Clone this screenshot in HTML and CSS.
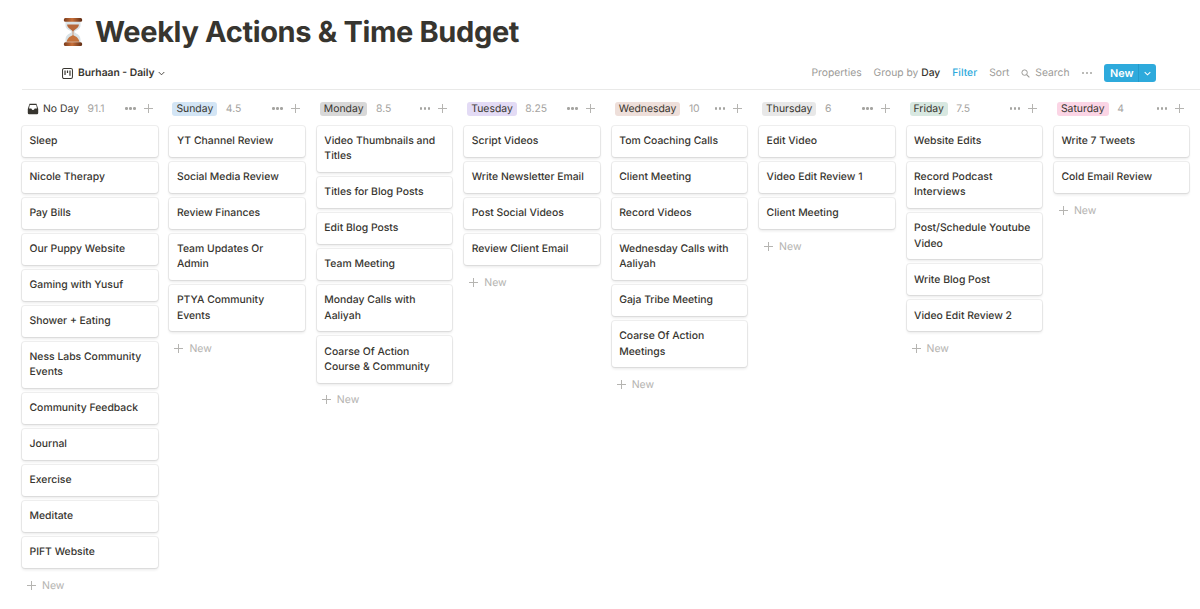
FILE: index.html
```html
<!DOCTYPE html>
<html lang="en">
<head>
<meta charset="utf-8">
<title>Weekly Actions &amp; Time Budget</title>
<link rel="stylesheet" href="styles.css">
</head>
<body>
<header class="head">
  <svg class="hourglass" viewBox="0 0 20 28" aria-hidden="true">
    <defs>
      <linearGradient id="wood" x1="0" x2="1" y1="0" y2="0"><stop offset="0" stop-color="#7a3c1c"/><stop offset=".45" stop-color="#c8703a"/><stop offset="1" stop-color="#5f2c14"/></linearGradient>
    </defs>
    <path d="M3 4 H17 V8 C17 12 12 12.5 11.3 14 C12 15.5 17 16 17 21 V24 H3 V21 C3 16 8 15.5 8.7 14 C8 12.5 3 12 3 8 Z" fill="#d9e2e6"/>
    <path d="M4.5 7 H15.5 C15.5 10.5 11.5 11.5 10 13.5 C8.500 11.500 4.500 10.500 4.500 7 Z" fill="#b7683a"/>
    <path d="M4 23 C5 19 8 17.500 10 17 C12 17.500 15 19 16 23 Z" fill="#c4723c"/>
    <rect x="9.700" y="13" width=".6" height="5" fill="#c4723c"/>
    <rect x="1.500" y="1" width="17" height="3.500" rx="1.400" fill="url(#wood)"/>
    <rect x="1.500" y="23.500" width="17" height="3.500" rx="1.400" fill="url(#wood)"/>
  </svg>
  <h1 class="title">Weekly Actions &amp; Time Budget</h1>
</header>

<nav class="toolbar">
  <div class="view">
    <svg class="view-icon" viewBox="0 0 12 12" aria-hidden="true"><rect x=".6" y=".6" width="10.800" height="10.800" rx="1.600" fill="none" stroke="#37352f" stroke-width="1.100"/><path d="M3.300 2.800 V7.500 M6 2.800 V5.500 M8.700 2.800 V8.500" stroke="#37352f" stroke-width="1.300" fill="none"/></svg>
    <span>Burhaan - Daily</span>
    <svg class="caret" viewBox="0 0 8 5" aria-hidden="true"><path d="M.8 .8 L4 4 L7.200 .8" fill="none" stroke="#37352f" stroke-width="1"/></svg>
  </div>
  <div class="actions">
    <span>Properties</span>
    <span>Group by <b class="strong">Day</b></span>
    <span class="blue">Filter</span>
    <span>Sort</span>
    <span class="search">
      <svg class="search-icon" viewBox="0 0 10 10" aria-hidden="true"><circle cx="4" cy="4" r="3" fill="none" stroke="#9b9a97" stroke-width="1.100"/><path d="M6.200 6.200 L9.300 9.300" stroke="#9b9a97" stroke-width="1.200"/></svg>
      Search
    </span>
    <span class="dots dots-top"><i></i><i></i><i></i></span>
    <div class="new-btn">
      <span class="new-label">New</span>
      <span class="new-arrow"><svg class="new-caret" viewBox="0 0 8 5" aria-hidden="true"><path d="M.8 .8 L4 4 L7.200 .8" fill="none" stroke="#fff" stroke-width="1.200"/></svg></span>
    </div>
  </div>
</nav>

<main class="board">
  <section class="col">
    <div class="col-head">
      <svg class="inbox" viewBox="0 0 12 12" aria-hidden="true"><path d="M2.500 .8 H9.500 L11.200 6 V10 Q11.200 11.200 10 11.200 H2 Q.8 11.200 .8 10 V6 Z" fill="#37352f"/><path d="M2.800 2 H9.200 L10 5.500 H7.700 Q7 7 6 7 Q5 7 4.300 5.500 H2 Z" fill="#fff"/></svg>
      <span class="plain">No Day</span><span class="sum">91.1</span>
      <span class="tools"><span class="dots"><i></i><i></i><i></i></span><span class="plus"></span></span>
    </div>
    <div class="card">Sleep</div>
    <div class="card">Nicole Therapy</div>
    <div class="card">Pay Bills</div>
    <div class="card">Our Puppy Website</div>
    <div class="card">Gaming with Yusuf</div>
    <div class="card">Shower + Eating</div>
    <div class="card">Ness Labs Community Events</div>
    <div class="card">Community Feedback</div>
    <div class="card">Journal</div>
    <div class="card">Exercise</div>
    <div class="card">Meditate</div>
    <div class="card">PIFT Website</div>
    <div class="add"><span class="plus"></span>New</div>
  </section>

  <section class="col">
    <div class="col-head"><span class="tag sun">Sunday</span><span class="sum">4.5</span>
      <span class="tools"><span class="dots"><i></i><i></i><i></i></span><span class="plus"></span></span></div>
    <div class="card">YT Channel Review</div>
    <div class="card">Social Media Review</div>
    <div class="card">Review Finances</div>
    <div class="card">Team Updates Or Admin</div>
    <div class="card">PTYA Community Events</div>
    <div class="add"><span class="plus"></span>New</div>
  </section>

  <section class="col">
    <div class="col-head"><span class="tag mon">Monday</span><span class="sum">8.5</span>
      <span class="tools"><span class="dots"><i></i><i></i><i></i></span><span class="plus"></span></span></div>
    <div class="card">Video Thumbnails and Titles</div>
    <div class="card">Titles for Blog Posts</div>
    <div class="card">Edit Blog Posts</div>
    <div class="card">Team Meeting</div>
    <div class="card">Monday Calls with Aaliyah</div>
    <div class="card">Coarse Of Action Course &amp; Community</div>
    <div class="add"><span class="plus"></span>New</div>
  </section>

  <section class="col">
    <div class="col-head"><span class="tag tue">Tuesday</span><span class="sum">8.25</span>
      <span class="tools"><span class="dots"><i></i><i></i><i></i></span><span class="plus"></span></span></div>
    <div class="card">Script Videos</div>
    <div class="card">Write Newsletter Email</div>
    <div class="card">Post Social Videos</div>
    <div class="card">Review Client Email</div>
    <div class="add"><span class="plus"></span>New</div>
  </section>

  <section class="col">
    <div class="col-head"><span class="tag wed">Wednesday</span><span class="sum">10</span>
      <span class="tools"><span class="dots"><i></i><i></i><i></i></span><span class="plus"></span></span></div>
    <div class="card">Tom Coaching Calls</div>
    <div class="card">Client Meeting</div>
    <div class="card">Record Videos</div>
    <div class="card">Wednesday Calls with Aaliyah</div>
    <div class="card">Gaja Tribe Meeting</div>
    <div class="card">Coarse Of Action Meetings</div>
    <div class="add"><span class="plus"></span>New</div>
  </section>

  <section class="col">
    <div class="col-head"><span class="tag thu">Thursday</span><span class="sum">6</span>
      <span class="tools"><span class="dots"><i></i><i></i><i></i></span><span class="plus"></span></span></div>
    <div class="card">Edit Video</div>
    <div class="card">Video Edit Review 1</div>
    <div class="card">Client Meeting</div>
    <div class="add"><span class="plus"></span>New</div>
  </section>

  <section class="col">
    <div class="col-head"><span class="tag fri">Friday</span><span class="sum">7.5</span>
      <span class="tools"><span class="dots"><i></i><i></i><i></i></span><span class="plus"></span></span></div>
    <div class="card">Website Edits</div>
    <div class="card">Record Podcast Interviews</div>
    <div class="card">Post/Schedule Youtube Video</div>
    <div class="card">Write Blog Post</div>
    <div class="card">Video Edit Review 2</div>
    <div class="add"><span class="plus"></span>New</div>
  </section>

  <section class="col">
    <div class="col-head"><span class="tag sat">Saturday</span><span class="sum">4</span>
      <span class="tools"><span class="dots"><i></i><i></i><i></i></span><span class="plus"></span></span></div>
    <div class="card">Write 7 Tweets</div>
    <div class="card">Cold Email Review</div>
    <div class="add"><span class="plus"></span>New</div>
  </section>
</main>
</body>
</html>
```
FILE: styles.css
```css
* { box-sizing: border-box; }
html, body { margin: 0; padding: 0; }
body {
  width: 1200px;
  height: 609px;
  overflow: hidden;
  background: #fff;
  color: #37352f;
  font-family: Inter, "Liberation Sans", sans-serif;
  font-size: 10.5px;
  text-rendering: geometricPrecision;
}
.head {
  display: flex;
  align-items: center;
  gap: 11px;
  height: 60px;
  padding: 3px 0 0 62px;
}
.hourglass { width: 22px; height: 30px; flex: none; }
.title {
  margin: 0;
  font-size: 29px;
  line-height: 38px;
  font-weight: 700;
  letter-spacing: -0.35px;
  color: #37352f;
}
.toolbar {
  display: flex;
  justify-content: space-between;
  align-items: center;
  height: 26px;
  margin-left: 22px;
  padding: 0 44px 3px 40px;
  border-bottom: 1px solid #e9e9e8;
  box-sizing: content-box;
}
.view { display: flex; align-items: center; font-weight: 600; font-size: 10.3px; }
.view-icon { width: 11px; height: 11px; margin-right: 5px; }
.caret { width: 7px; height: 5px; margin-left: 3px; }
.actions { display: flex; align-items: center; gap: 12px; color: #9b9a97; font-size: 10.3px; }
.strong { font-weight: 500; color: #37352f; }
.blue { color: #2eaadc; font-weight: 500; }
.search { display: flex; align-items: center; gap: 5px; }
.search-icon { width: 9px; height: 9px; }
.dots { display: inline-flex; gap: 1.500px; align-items: center; }
.dots i { width: 2.500px; height: 2.500px; border-radius: 50%; background: #a5a4a1; display: block; }
.new-btn {
  display: flex;
  align-items: center;
  height: 18px;
  background: #2eaadc;
  border-radius: 3px;
  color: #fff;
  font-weight: 600;
  font-size: 10.800px;
}
.new-label { padding: 0 6px 0 6px; width: 34px; text-align: center; }
.new-arrow { display: flex; align-items: center; justify-content: center; width: 18px; height: 18px; border-left: 1px solid #239bcb; }
.new-caret { width: 7px; height: 5px; }
.board {
  display: grid;
  grid-template-columns: repeat(8, 135.500px);
  column-gap: 11.930px;
  align-items: start;
  padding: 6px 0 0 22px;
}
.col { display: flex; flex-direction: column; gap: 5px; }
.col-head { display: flex; align-items: center; height: 24px; margin-bottom: 1px; padding: 1px 5px 0 2px; font-size: 10.400px; }
.inbox { width: 12px; height: 12px; margin: 0 4px 0 3px; }
.plain { font-weight: 400; }
.tag { height: 14px; line-height: 14px; padding: 0 4px; border-radius: 3px; margin-left: 1px; }
.sun { background: #d3e5f5; }
.mon { background: #d8d8d8; }
.tue { background: #e3dbf5; }
.wed { background: #eedfda; }
.thu { background: #e8e8e8; }
.fri { background: #d8e8e1; }
.sat { background: #fbd5e5; }
.sum { margin-left: 8.500px; color: #a5a4a1; }
.tools { margin-left: auto; display: flex; align-items: center; gap: 8px; }
.plus { position: relative; display: inline-block; width: 9px; height: 9px; flex: none; }
.plus::before, .plus::after { content: ""; position: absolute; background: #b5b4b1; }
.plus::before { left: 0; right: 0; top: 4px; height: 1px; }
.plus::after { top: 0; bottom: 0; left: 4px; width: 1px; }
.card {
  padding: 7.200px 7.500px 8.600px;
  min-height: 31px;
  line-height: 15.200px;
  font-size: 10.400px;
  font-weight: 500;
  background: #fff;
  border-radius: 3px;
  box-shadow: 0 0 0 1px rgba(15,15,15,.07), 0 2px 3px rgba(15,15,15,.09);
}
.add { display: flex; align-items: center; gap: 6px; height: 24.500px; padding-left: 5px; color: #b5b4b1; font-size: 10.500px; }
```
